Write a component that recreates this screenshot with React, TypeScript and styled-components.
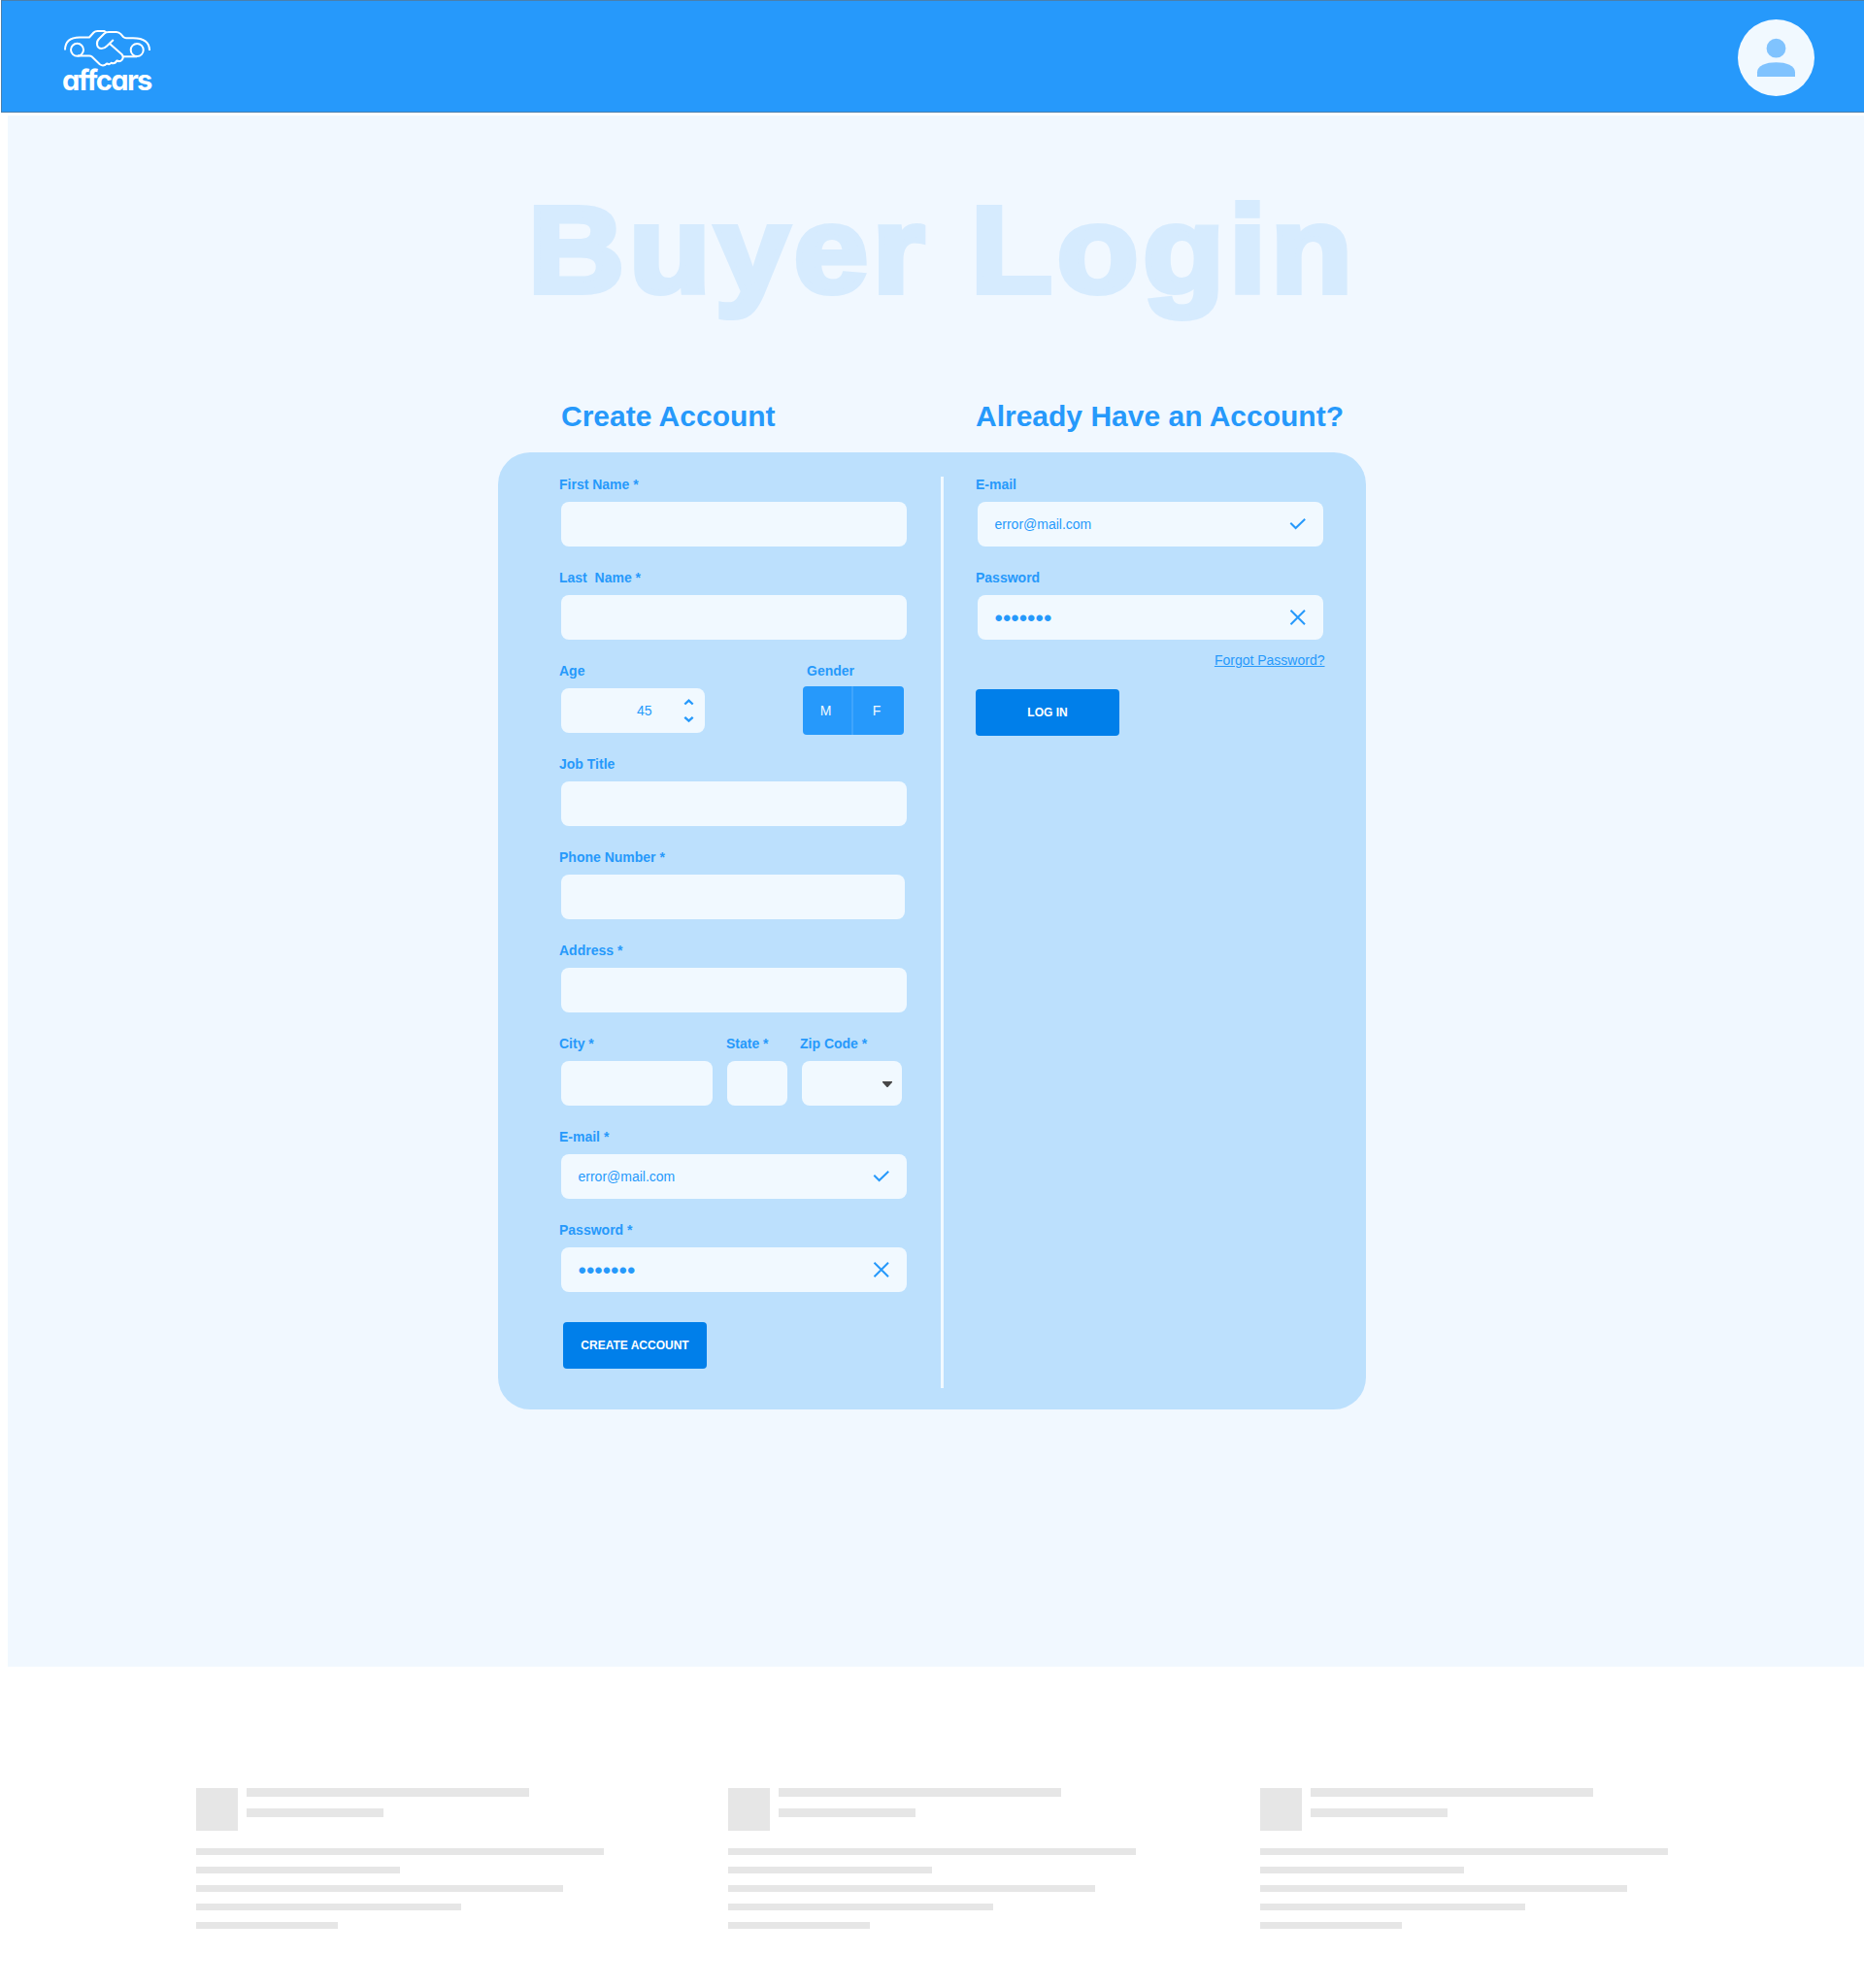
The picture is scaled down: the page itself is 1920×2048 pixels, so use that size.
import React from "react";
import styled, { createGlobalStyle } from "styled-components";

const blue = "#2699fb";
const pale = "#f1f9ff";
const sans = `"Liberation Sans", Arial, Helvetica, sans-serif`;

const GlobalStyle = createGlobalStyle`
  * { box-sizing: border-box; }
  body { margin: 0; background: #fff; font-family: ${sans}; color: ${blue}; }
`;

const Page = styled.div`
  width: 1920px;
  height: 2048px;
  overflow: hidden;
`;

const Header = styled.header`
  display: flex;
  justify-content: space-between;
  align-items: flex-start;
  height: 116px;
  margin-left: 1px;
  padding: 19px 51px 0 62px;
  background: ${blue};
  border: solid #4a7fac;
  border-width: 1px 0 1px 1px;
`;

const Brand = styled.div`
  width: 96px;
  padding-top: 8px;
  color: #fff;
`;

const BrandMark = styled.svg`
  display: block;
  width: 96px;
  height: 42px;
`;

const BrandName = styled.div`
  height: 30px;
  margin: -2px 0 0 0;
  font: 700 29px/30px Inter, sans-serif;
  font-feature-settings: "cv11";
  letter-spacing: -1.6px;
  white-space: nowrap;
`;

const Avatar = styled.div`
  width: 79px;
  height: 79px;
  border-radius: 50%;
  background: ${pale};
`;

const Main = styled.main`
  margin: 3px 0 0 8px;
  height: 1598px;
  padding-top: 63px;
  background: #f1f8ff;
`;

const Title = styled.h1`
  margin: 0 0 0 536px;
  width: 900px;
  height: 150px;
  font-size: 127px;
  line-height: 150px;
  font-weight: 700;
  letter-spacing: 4.5px;
  color: #d6ebfe;
  -webkit-text-stroke: 6px #d6ebfe;
  transform: scaleX(1.08);
  transform-origin: left;
  white-space: nowrap;
`;

const Headings = styled.div`
  display: flex;
  margin: 80px 0 0 570px;
`;

const Heading = styled.h2`
  flex: none;
  width: 427px;
  margin: 0;
  font-size: 30px;
  line-height: 34px;
  white-space: nowrap;
`;

const Panel = styled.section`
  display: grid;
  grid-template-columns: 456px 3px 435px;
  width: 894px;
  height: 986px;
  margin: 20px 0 0 505px;
  padding-top: 25px;
  border-radius: 33px;
  background: #bce0fd;
`;

const Column = styled.div<{ $left: number }>`
  padding-left: ${(p) => p.$left}px;
`;

const Divider = styled.div`
  height: 939px;
  background: ${pale};
`;

const Row = styled.div`
  display: flex;
  height: 96px;
`;

const Field = styled.div<{ $space?: number }>`
  margin-right: ${(p) => p.$space ?? 0}px;
`;

const Label = styled.div<{ $indent?: number }>`
  height: 16px;
  padding-left: ${(p) => p.$indent ?? 0}px;
  margin-bottom: 10px;
  font-size: 14px;
  line-height: 16px;
  font-weight: 700;
  white-space: pre;
`;

const Box = styled.div<{ $width?: number; $indent?: number }>`
  display: flex;
  align-items: center;
  justify-content: space-between;
  width: ${(p) => p.$width ?? 356}px;
  height: 46px;
  margin-left: ${(p) => p.$indent ?? 2}px;
  padding: 0 17px 0 17.5px;
  border-radius: 8px;
  background: ${pale};
  font-size: 14px;
  line-height: 16px;
`;

const NumberBox = styled(Box)`
  justify-content: flex-end;
  gap: 32.5px;
  padding-right: 11px;
`;

const SelectBox = styled(Box)`
  justify-content: flex-end;
  padding: 2px 10px 0 0;
`;

const Dots = styled.span`
  padding-top: 2px;
  font-size: 24px;
  line-height: 24px;
`;

const Glyph = styled.svg`
  display: block;
  fill: none;
  stroke: ${blue};
`;

const Toggle = styled.div`
  display: flex;
  width: 104px;
  height: 50px;
  margin: -2px 0 0 3px;
  border-radius: 4px;
  overflow: hidden;
  background: ${blue};
`;

const Option = styled.div<{ $width: number }>`
  display: flex;
  align-items: center;
  justify-content: center;
  width: ${(p) => p.$width}px;
  padding-right: 3px;
  color: ${pale};
  font-size: 14px;
  & + & { padding-right: 4px; border-left: 2px solid #3fa5fc; }
`;

const Button = styled.div<{ $left?: number; $top: number }>`
  display: flex;
  align-items: center;
  justify-content: center;
  width: 148px;
  height: 48px;
  margin: ${(p) => p.$top}px 0 0 ${(p) => p.$left ?? 0}px;
  border-radius: 4px;
  background: #007fea;
  color: #fff;
  font-size: 12px;
  font-weight: 700;
`;

const Forgot = styled.div`
  width: 359.500px;
  height: 16px;
  margin-top: -11px;
  font-size: 14px;
  line-height: 16px;
  text-align: right;
  text-decoration: underline;
`;

const Footer = styled.footer`
  display: flex;
  gap: 128px;
  padding: 125px 0 0 202px;
`;

const Card = styled.div`
  width: 420px;
`;

const CardHead = styled.div`
  display: flex;
  gap: 9px;
  margin-bottom: 18px;
`;

const Thumb = styled.div`
  width: 43px;
  height: 44px;
  background: #e6e6e6;
`;

const Stack = styled.div`
  display: flex;
  flex-direction: column;
  gap: 12px;
`;

const Bar = styled.div<{ $width: number; $height: number }>`
  width: ${(p) => p.$width}px;
  height: ${(p) => p.$height}px;
  background: #e6e6e6;
`;

const Check = () => (
  <Glyph width="18" height="14" viewBox="0 0 18 14" strokeWidth="2">
    <path d="M1.3 5.8 6.6 11 16.2 1.8" />
  </Glyph>
);

const Cross = () => (
  <Glyph width="18" height="18" viewBox="0 0 18 18" strokeWidth="2">
    <path d="M1.5 1.7 16 16.2M16 1.7 1.5 16.2" />
  </Glyph>
);

const Stepper = () => (
  <Glyph width="11" height="26" viewBox="0 0 11 26" strokeWidth="2.3">
    <path d="M1.3 6.500 5.500 2.600 9.700 6.500M1.300 19.800 5.500 23.700 9.700 19.800" />
  </Glyph>
);

type FieldProps = {
  label: string;
  required?: boolean;
  width?: number;
  space?: number;
  indent?: number;
  children?: React.ReactNode;
};

const TextField = ({ label, required, width, space, indent, children }: FieldProps) => (
  <Field $space={space}>
    <Label>{label}{required && " *"}</Label>
    <Box $width={width} $indent={indent}>{children}</Box>
  </Field>
);

const Credentials = ({ required }: { required?: boolean }) => (
  <>
    <Row>
      <TextField label="E-mail" required={required}><span>error@mail.com</span><Check /></TextField>
    </Row>
    <Row>
      <TextField label="Password" required={required}><Dots>•••••••</Dots><Cross /></TextField>
    </Row>
  </>
);

export default function App() {
  return (
    <Page>
      <GlobalStyle />
      <Header>
        <Brand>
          <BrandMark viewBox="64 28 96 42" fill="none" stroke="#fff" strokeWidth="2" strokeLinejoin="round">
            <path d="M67 51.5C67 43 72 38.5 82 38.5H92L96.500 33.500Q98 32 100.500 32H107.500L109.500 33.500" />
            <path d="M116.800 41 110 47.500Q107.500 50 104.500 50C99.500 50 98.500 43.500 102 40L107.500 34.500Q109 33 112 33H120Q122.500 33 124.500 35.200L127 38Q128.300 39.200 130 39.200H137C148 39.200 154 43.500 154 52" />
            <path d="M113 45 125.500 56Q128 59 125.500 61.800 123.500 64 120.300 62.500 118.500 66.300 114.500 64.800 113 67 110 65.500 106.500 69 102.800 66.300L94.500 58.300Q93.500 57.500 92 57.500H80" />
            <path d="M126.500 58.300H141" />
            <circle cx="79.500" cy="51.300" r="6.500" />
            <circle cx="141.200" cy="51.500" r="6.500" />
          </BrandMark>
          <BrandName>affcars</BrandName>
        </Brand>
        <Avatar>
          <svg width="79" height="79" viewBox="0 0 79 79" fill="#80c3fe">
            <circle cx="39.500" cy="29.700" r="9.900" />
            <path d="M20 59V54.500C20 47.500 29 44.300 39.500 44.300S59 47.500 59 54.500V59Z" />
          </svg>
        </Avatar>
      </Header>
      <Main>
        <Title>Buyer Login</Title>
        <Headings>
          <Heading>Create Account</Heading>
          <Heading>Already Have an Account?</Heading>
        </Headings>
        <Panel>
          <Column $left={63}>
            <Row><TextField label="First Name" required /></Row>
            <Row><TextField label="Last  Name" required /></Row>
            <Row>
              <Field $space={98}>
                <Label>Age</Label>
                <NumberBox $width={148}>45<Stepper /></NumberBox>
              </Field>
              <Field>
                <Label $indent={7}>Gender</Label>
                <Toggle>
                  <Option $width={50}>M</Option>
                  <Option $width={54}>F</Option>
                </Toggle>
              </Field>
            </Row>
            <Row><TextField label="Job Title" /></Row>
            <Row><TextField label="Phone Number" required width={354} /></Row>
            <Row><TextField label="Address" required /></Row>
            <Row>
              <TextField label="City" required width={156} space={14} />
              <TextField label="State" required width={62} space={13} indent={1} />
              <Field>
                <Label>Zip Code *</Label>
                <SelectBox $width={103}>
                  <svg width="10" height="6" viewBox="0 0 10 6" fill="#474747"><path d="M0 0H10V1L5.500 6H4.500L0 1Z" /></svg>
                </SelectBox>
              </Field>
            </Row>
            <Credentials required />
            <Button $top={7} $left={4}>CREATE ACCOUNT</Button>
          </Column>
          <Divider />
          <Column $left={33}>
            <Credentials />
            <Forgot>Forgot Password?</Forgot>
            <Button $top={22}>LOG IN</Button>
          </Column>
        </Panel>
      </Main>
      <Footer>
        {[0, 1, 2].map((n) => (
          <Card key={n}>
            <CardHead>
              <Thumb />
              <Stack>
                <Bar $width={291} $height={9} />
                <Bar $width={141} $height={9} />
              </Stack>
            </CardHead>
            <Stack>
              {[420, 210, 378, 273, 146].map((w) => <Bar key={w} $width={w} $height={7} />)}
            </Stack>
          </Card>
        ))}
      </Footer>
    </Page>
  );
}
